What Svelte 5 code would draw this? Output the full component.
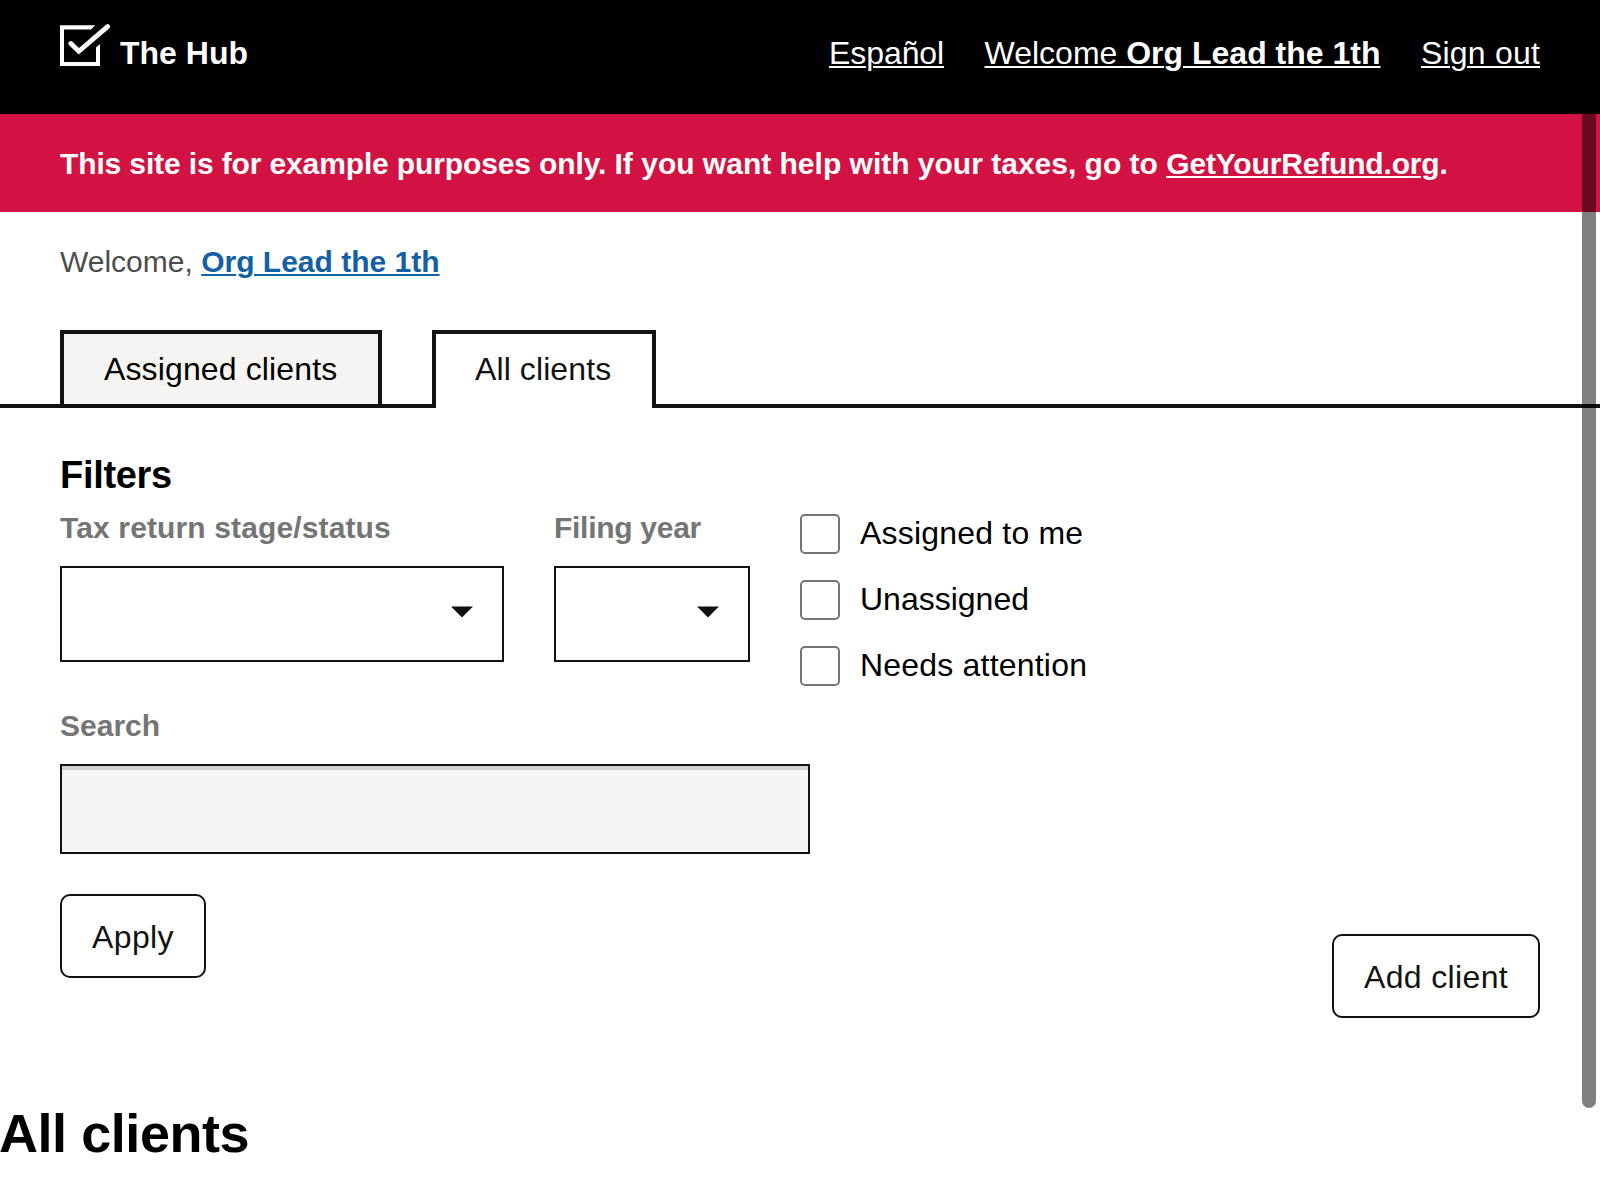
<script>
  const tabs = [
    { label: 'Assigned clients', kind: 'assigned' },
    { label: 'All clients', kind: 'all' },
  ];
  const checks = [
    { label: 'Assigned to me', kind: 'me' },
    { label: 'Unassigned', kind: 'un' },
    { label: 'Needs attention', kind: 'needs' },
  ];
</script>

{#snippet arrow()}
  <svg class="arrow" viewBox="0 0 22 12" width="22" height="12" aria-hidden="true">
    <path d="M0 0.4H22L11 11.6Z" fill="#111" />
  </svg>
{/snippet}

<div class="page">
  <header>
    <div class="brand">
      <svg class="logo" viewBox="0 0 50 44" width="50" height="44" aria-hidden="true">
        <path d="M35.2 3.3H0V44H40V22L36 25.6V40H4V7.6H31Z" transform="translate(0 -2)" fill="#fff" />
        <path d="M10.8 19.6L18.8 27.3L47.6 2.6" fill="none" stroke="#fff" stroke-width="4.8" stroke-linecap="round" />
      </svg>
      <span class="name">The Hub</span>
    </div>
    <nav>
      <a class="es" href="#es">Español</a>
      <a class="account" href="#account">Welcome <b>Org Lead the 1th</b></a>
      <a class="out" href="#out">Sign out</a>
    </nav>
  </header>

  <div class="banner">
    <p><span class="notice">This site is for example purposes only.</span> If you want help with your taxes, go to <a href="#gyr">GetYourRefund.org</a>.</p>
  </div>

  <main>
    <p class="greeting">Welcome, <a href="#me">Org Lead the 1th</a></p>

    <div class="tabs">
      {#each tabs as tab}
        <a class="tab {tab.kind}" href="#tab">{tab.label}</a>
      {/each}
    </div>

    <section class="filters">
      <h2>Filters</h2>
      <div class="row">
        <label class="field stage">
          <span class="caption">Tax return stage/status</span>
          <span class="select"><select><option></option></select>{@render arrow()}</span>
        </label>
        <label class="field year">
          <span class="caption">Filing year</span>
          <span class="select"><select><option></option></select>{@render arrow()}</span>
        </label>
        <div class="checks">
          {#each checks as check}
            <label class="check {check.kind}"><input type="checkbox" /><span>{check.label}</span></label>
          {/each}
        </div>
      </div>
      <label class="field search">
        <span class="caption">Search</span>
        <input type="text" />
      </label>
      <div class="actions">
        <button class="apply">Apply</button>
        <button class="add">Add client</button>
      </div>
    </section>

    <h1>All clients</h1>
  </main>

  <div class="scrollbar"></div>
</div>

<style>
  :global(body) { margin: 0; background: #fff; overflow: hidden; }
  .page {
    position: relative;
    width: 1600px;
    height: 1200px;
    overflow: hidden;
    background: #fff;
    color: #000;
    font-family: "Liberation Sans", Arial, sans-serif;
    font-size: 32px;
    line-height: 38px;
  }
  .page * { box-sizing: border-box; }
  p, h1, h2 { margin: 0; }
  a { color: inherit; text-underline-offset: 2px; text-decoration-thickness: 2px; }

  header {
    display: flex;
    justify-content: space-between;
    align-items: flex-start;
    height: 114px;
    padding: 0 60px;
    background: #000;
    color: #fff;
  }
  .brand { display: flex; gap: 10px; padding-top: 24px; }
  .name { padding-top: 10px; font-weight: 700; }
  .logo { display: block; }
  nav { display: flex; gap: 40.5px; padding-top: 34px; }
  .es { letter-spacing: -0.1px; }
  .out { letter-spacing: 0.2px; }

  .banner {
    height: 98px;
    padding: 31px 60px 29px;
    background: #d11242;
    color: #fff;
    font-size: 30px;
    font-weight: 700;
  }
  .banner p { white-space: nowrap; }
  .notice { letter-spacing: -0.13px; }
  .banner a { letter-spacing: -0.17px; }

  .greeting {
    padding: 30px 60px 48px;
    font-size: 30px;
    line-height: 40px;
    color: #4d4d4d;
  }
  .greeting a { color: #1460a5; font-weight: 700; }

  .tabs {
    display: flex;
    gap: 50px;
    height: 78px;
    padding: 0 60px;
    border-bottom: 4px solid #121212;
  }
  .tab {
    height: 74px;
    padding: 16px 0 0 40px;
    border: 4px solid #121212;
    border-bottom: 0;
    background: #f6f5f3;
    text-decoration: none;
    white-space: nowrap;
  }
  .tab.assigned { width: 322px; letter-spacing: 0.13px; }
  .tab.all { width: 224px; height: 78px; padding-left: 39px; background: #fff; color: #121212; letter-spacing: 0.1px; }

  .filters { padding: 44px 60px 0; }
  h2 { font-size: 38px; line-height: 46px; letter-spacing: -0.3px; }
  .row { display: flex; margin-top: 12px; height: 198px; }
  .field { display: flex; flex-direction: column; gap: 20px; }
  .caption {
    font-size: 30px;
    line-height: 36px;
    font-weight: 700;
    color: #757575;
    white-space: nowrap;
  }
  .stage { width: 444px; margin-right: 50px; letter-spacing: 0.13px; }
  .year { width: 196px; margin-right: 50px; letter-spacing: -0.28px; }
  .select { position: relative; display: block; height: 96px; }
  select {
    display: block;
    width: 100%;
    height: 100%;
    border: 2px solid #121212;
    border-radius: 0;
    background: #fff;
    appearance: none;
  }
  .arrow { position: absolute; right: 31px; top: 40px; }
  .checks { display: flex; flex-direction: column; gap: 26px; padding-top: 4px; }
  .check { display: flex; gap: 20px; height: 40px; }
  .me, .needs { letter-spacing: 0.2px; }
  .check input {
    width: 40px;
    height: 40px;
    margin: 0;
    border: 2px solid #757575;
    border-radius: 5px;
    background: #fff;
    appearance: none;
  }
  .search input {
    width: 750px;
    height: 90px;
    border: 2px solid #121212;
    border-radius: 0;
    background: #f6f5f3;
    box-shadow: inset 0 4px 0 #d1d0cf;
  }
  .actions {
    display: flex;
    justify-content: space-between;
    align-items: flex-start;
    padding-top: 40px;
  }
  button {
    height: 84px;
    padding: 2px 0 0;
    border: 2px solid #121212;
    border-radius: 10px;
    background: #fff;
    color: #121212;
    font: inherit;
  }
  .apply { width: 146px; letter-spacing: 0.4px; }
  .add { width: 208px; margin-top: 40px; letter-spacing: 0.35px; }
  h1 { margin: 83px 0 0 -1px; font-size: 54px; line-height: 64px; letter-spacing: -0.45px; }

  .scrollbar {
    position: absolute;
    top: 114px;
    right: 4px;
    width: 14px;
    height: 994px;
    border-radius: 0 0 7px 7px;
    background: rgba(0, 0, 0, 0.5);
  }
</style>
